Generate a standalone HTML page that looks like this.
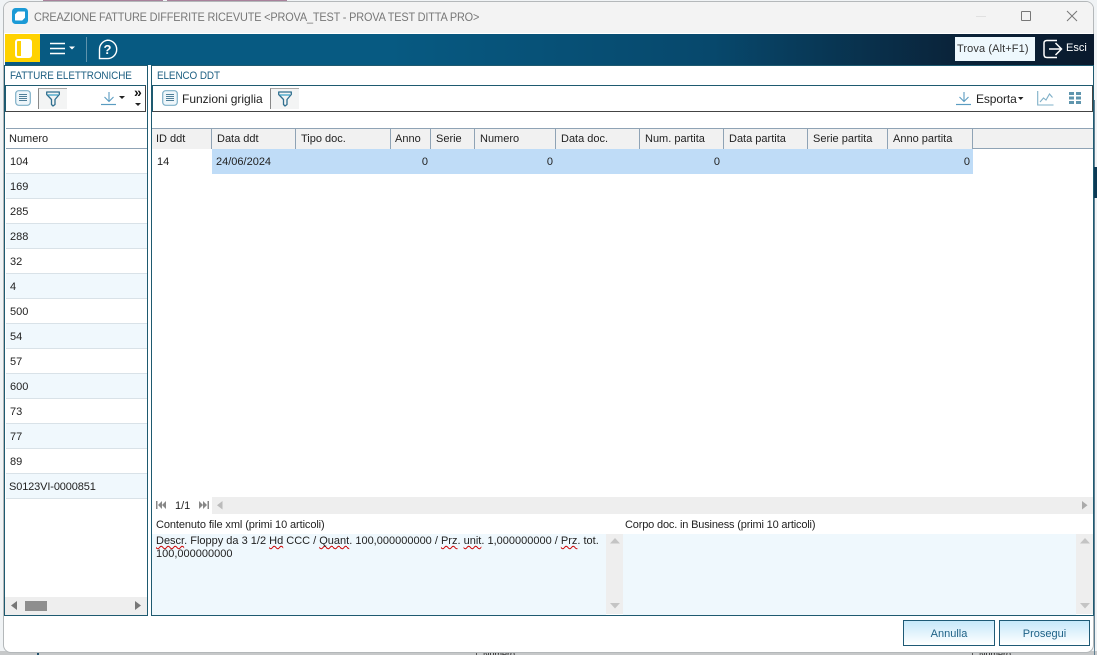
<!DOCTYPE html>
<html><head><meta charset="utf-8">
<style>
html,body{margin:0;padding:0}
body{width:1097px;height:655px;overflow:hidden;position:relative;background:#fff;font-family:"Liberation Sans",sans-serif;font-size:11px;color:#222}
div,span,svg{position:absolute;box-sizing:border-box}
.t{white-space:nowrap;line-height:14px}
.h{top:129px;height:20px;border-right:1px solid #8fa3b5;line-height:20px;padding-left:5px;white-space:nowrap;background:#f1f1f1;font-size:11px;color:#222}
.r{left:6px;width:141px;height:25px;border-bottom:1px solid #d9e2e8;line-height:26px;padding-left:4px;font-size:11px;color:#222}
.b{background:#f0f8fd}
.n{top:149px;height:25px;line-height:26px;text-align:right;padding-right:3px;color:#222}
.sq{position:static;text-decoration:underline wavy #c00;text-decoration-thickness:1px;text-underline-offset:1px;text-decoration-skip-ink:none}
.btn{top:620px;height:26px;border:1px solid #1e5a76;background:linear-gradient(#c6e8fa,#fff);color:#1e6287;text-align:center;line-height:26px;font-size:11px}
</style></head><body>
<div style="left:0;top:0;width:1097px;height:655px;background:#f0f3f5"></div>
<div style="left:0;top:651px;width:1097px;height:4px;background:#c6c8c9"></div>
<div style="left:43px;top:0;width:120px;height:2px;background:#a8819b"></div>
<div style="left:167px;top:0;width:120px;height:2px;background:#a8819b"></div>
<div style="left:37px;top:648px;width:2px;height:7px;background:#1e4f6a"></div>
<div style="left:1094px;top:100px;width:1px;height:555px;background:#5f7f92"></div>
<div style="left:1094px;top:167px;width:3px;height:31px;background:#0c3a55"></div>
<div style="left:476px;top:650px;width:100px;height:5px;font-size:9px;line-height:9px;overflow:hidden;padding-left:6px;border-left:1px solid #555">Numero</div>
<div style="left:972px;top:650px;width:100px;height:5px;font-size:9px;line-height:9px;overflow:hidden;padding-left:6px;border-left:1px solid #555">Numero</div>

<!-- window -->
<div style="left:3px;top:1px;width:1091px;height:652px;background:#fff;border:1px solid #b4b8ba;border-radius:8px;overflow:hidden">
<div style="left:0;top:0;width:1091px;height:31px;background:#f3f3f3"></div>
</div>
<svg style="left:12px;top:8px" width="16" height="16" viewBox="0 0 16 16"><rect width="16" height="16" rx="3.5" fill="#1b9ad6"/><path d="M6 4H12.5V9.5L10 12H3.5V6.5Z" fill="#fff" stroke="#fff" stroke-linejoin="round"/></svg>
<div class="t" style="left:34px;top:10px;color:#777;font-size:12px;transform-origin:0 50%;transform:scaleX(.908);letter-spacing:-.17px">CREAZIONE FATTURE DIFFERITE RICEVUTE &lt;PROVA_TEST - PROVA TEST DITTA PRO&gt;</div>
<div style="left:976px;top:16px;width:10px;height:1px;background:#e0e0e0"></div>
<div style="left:1021px;top:11px;width:10px;height:10px;border:1px solid #777;border-radius:1px"></div>
<svg style="left:1066px;top:10px" width="12" height="12" viewBox="0 0 12 12"><path d="M1 1L11 11M11 1L1 11" stroke="#777" stroke-width="1" fill="none"/></svg>

<!-- toolbar -->
<div style="left:5px;top:34px;width:1089px;height:31px;background:linear-gradient(90deg,#075a82 0%,#075a82 35%,#07486c 65%,#0a2238 88%,#0a1a2d 100%)"></div>
<div style="left:5px;top:34px;width:35px;height:28px;background:#ffd200"></div>
<div style="left:15px;top:39px;width:17px;height:19px;border-radius:3px;border:2px solid #fff;background:linear-gradient(90deg,#ffd200 30%,#fff 30%)"></div>
<svg style="left:49px;top:42px" width="28" height="14" viewBox="0 0 28 14"><path d="M1 1.5H16M1 6.5H16M1 11.5H16" stroke="#fff" stroke-width="1.6"/><path d="M20 4.5H26L23 7.5Z" fill="#fff"/></svg>
<div style="left:86px;top:37px;width:1px;height:25px;background:#5f93ac"></div>
<svg style="left:97px;top:39px" width="21" height="21" viewBox="0 0 21 21"><path d="M10.5 1.2A9.2 9.2 0 1 1 10.5 19.6H2.5V10.5A9.2 9.2 0 0 1 10.5 1.2Z" fill="none" stroke="#fff" stroke-width="1.4"/><text x="10.5" y="15" font-size="13" font-weight="bold" fill="#fff" text-anchor="middle" font-family="Liberation Sans">?</text></svg>
<div style="left:955px;top:37px;width:80px;height:24px;background:#eef8fd;color:#333;line-height:24px;padding-left:2px;font-size:11px;letter-spacing:.1px;white-space:nowrap">Trova (Alt+F1)</div>
<svg style="left:1043px;top:39px" width="20" height="20" viewBox="0 0 20 20"><path d="M14 1.5H4Q1 1.5 1 4V15.5Q1 18.5 4 18.5H14" fill="none" stroke="#fff" stroke-width="1.5"/><path d="M6 10H18M12.5 4L18.5 10L12.5 16" fill="none" stroke="#fff" stroke-width="1.5"/></svg>
<div class="t" style="left:1066px;top:41px;color:#fff;font-size:11px">Esci</div>

<!-- left panel -->
<div style="left:4px;top:65px;width:144px;height:551px;border:1px solid #1e5a70;background:#fff"></div>
<div class="t" style="left:10px;top:69px;color:#1d5f82;font-size:11px;letter-spacing:-.1px;transform-origin:0 50%;transform:scaleX(.9)">FATTURE ELETTRONICHE</div>
<div style="left:5px;top:85px;width:141px;height:27px;border:1px solid #444;border-top-color:#1e5a70;border-left-color:#1e5a70;background:#fff"></div>
<svg style="left:15px;top:90px" width="16" height="16" viewBox="0 0 16 16"><rect x=".7" y=".7" width="14.6" height="14.6" rx="3" fill="#eef6fa" stroke="#7fb0c8" stroke-width="1.2"/><path d="M4 4.5H12M4 6.5H12M4 8.5H12M4 10.5H12" stroke="#4f7f99"/></svg>
<div style="left:38px;top:88px;width:29px;height:21px;background:#f3f4f4;border-left:1px solid #888;border-top:1px solid #aaa"></div>
<svg style="left:46px;top:91px" width="14" height="16" viewBox="0 0 14 16"><path d="M.7 1H13.3V3.5L9 8.5V13.5L7 15L5.5 13.5V8.5L.7 3.5Z" fill="none" stroke="#2f6f8f" stroke-width="1.3" stroke-linejoin="round"/><path d="M2 4H12" stroke="#3fa5c8" stroke-width="1.3"/></svg>
<svg style="left:101px;top:91px" width="16" height="15" viewBox="0 0 16 15"><path d="M8 1V10M3.5 6L8 10.5L12.5 6" fill="none" stroke="#5b9cc1" stroke-width="1.1"/><path d="M0 13.5H15" stroke="#5b9cc1" stroke-width="1.2"/></svg>
<svg style="left:119px;top:96px" width="7" height="4"><path d="M0 0H6L3 3Z" fill="#222"/></svg>
<div style="left:134px;top:86px;font-size:14px;line-height:12px;font-weight:bold;color:#111">»</div>
<svg style="left:135px;top:103px" width="7" height="4"><path d="M0 0H6L3 3Z" fill="#222"/></svg>
<div style="left:6px;top:128px;width:141px;height:21px;border-top:1px solid #8fa3b5;border-bottom:1px solid #8fa3b5;background:#fff;line-height:20px;padding-left:3px">Numero</div>
<div class="r" style="top:149px">104</div>
<div class="r b" style="top:174px">169</div>
<div class="r" style="top:199px">285</div>
<div class="r b" style="top:224px">288</div>
<div class="r" style="top:249px">32</div>
<div class="r b" style="top:274px">4</div>
<div class="r" style="top:299px">500</div>
<div class="r b" style="top:324px">54</div>
<div class="r" style="top:349px">57</div>
<div class="r b" style="top:374px">600</div>
<div class="r" style="top:399px">73</div>
<div class="r b" style="top:424px">77</div>
<div class="r" style="top:449px">89</div>
<div class="r b" style="top:474px;padding-left:3px;letter-spacing:-.13px">S0123VI-0000851</div>
<div style="left:5px;top:597px;width:142px;height:18px;background:#eee"></div>
<svg style="left:11px;top:601px" width="7" height="10"><path d="M6 0V9L0 4.5Z" fill="#777"/></svg>
<div style="left:25px;top:601px;width:22px;height:10px;background:#8e8e8e"></div>
<svg style="left:135px;top:601px" width="7" height="10"><path d="M0 0V9L6 4.5Z" fill="#777"/></svg>

<!-- right panel -->
<div style="left:151px;top:65px;width:943px;height:551px;border:1px solid #1e5a70;background:#fff"></div>
<div class="t" style="left:157px;top:69px;color:#1d5f82;font-size:11px;letter-spacing:-.1px;transform-origin:0 50%;transform:scaleX(.9)">ELENCO DDT</div>
<div style="left:152px;top:85px;width:941px;height:27px;border:1px solid #444;border-top-color:#1e5a70;border-left-color:#1e5a70;background:#fff"></div>
<svg style="left:162px;top:90px" width="16" height="16" viewBox="0 0 16 16"><rect x=".7" y=".7" width="14.6" height="14.6" rx="3" fill="#eef6fa" stroke="#7fb0c8" stroke-width="1.2"/><path d="M4 4.5H12M4 6.5H12M4 8.5H12M4 10.5H12" stroke="#4f7f99"/></svg>
<div class="t" style="left:182px;top:92px;font-size:12px;color:#222">Funzioni griglia</div>
<div style="left:270px;top:88px;width:29px;height:21px;background:#f3f4f4;border-left:1px solid #888;border-top:1px solid #aaa"></div>
<svg style="left:278px;top:91px" width="14" height="16" viewBox="0 0 14 16"><path d="M.7 1H13.3V3.5L9 8.5V13.5L7 15L5.5 13.5V8.5L.7 3.5Z" fill="none" stroke="#2f6f8f" stroke-width="1.3" stroke-linejoin="round"/><path d="M2 4H12" stroke="#3fa5c8" stroke-width="1.3"/></svg>
<svg style="left:956px;top:91px" width="16" height="15" viewBox="0 0 16 15"><path d="M8 1V10M3.5 6L8 10.5L12.5 6" fill="none" stroke="#5b9cc1" stroke-width="1.1"/><path d="M0 13.5H15" stroke="#5b9cc1" stroke-width="1.2"/></svg>
<div class="t" style="left:976px;top:92px;font-size:12px;color:#222;letter-spacing:-.1px">Esporta</div>
<svg style="left:1018px;top:97px" width="6" height="4"><path d="M0 0H5.5L2.7 3Z" fill="#222"/></svg>
<svg style="left:1037px;top:91px" width="17" height="15" viewBox="0 0 17 15"><path d="M.7 0V14H16.5" fill="none" stroke="#7fb0c8" stroke-width="1.1"/><path d="M3 11L6.5 7L9 9L12.5 3L15.5 6.5" fill="none" stroke="#7fb0c8" stroke-width="1.1"/></svg>
<svg style="left:1069px;top:92px" width="12" height="12"><path d="M0 0H5V3H0ZM7 0H12V3H7ZM0 4.5H5V7.5H0ZM7 4.5H12V7.5H7ZM0 9H5V12H0ZM7 9H12V12H7Z" fill="#5f95ad"/></svg>

<div style="left:152px;top:128px;width:941px;height:21px;border-top:1px solid #8fa3b5;border-bottom:1px solid #8fa3b5;background:#f1f1f1"></div>
<div class="h" style="left:152px;width:60px;padding-left:4px">ID ddt</div>
<div class="h" style="left:212px;width:84px">Data ddt</div>
<div class="h" style="left:296px;width:95px">Tipo doc.</div>
<div class="h" style="left:391px;width:40px;padding-left:4px">Anno</div>
<div class="h" style="left:431px;width:44px">Serie</div>
<div class="h" style="left:475px;width:81px">Numero</div>
<div class="h" style="left:556px;width:84px">Data doc.</div>
<div class="h" style="left:640px;width:84px">Num. partita</div>
<div class="h" style="left:724px;width:84px">Data partita</div>
<div class="h" style="left:808px;width:80px">Serie partita</div>
<div class="h" style="left:888px;width:85px">Anno partita</div>

<div style="left:212px;top:149px;width:761px;height:25px;background:#bfdcf7"></div>
<div class="t" style="left:157px;top:155px">14</div>
<div class="t" style="left:216px;top:155px">24/06/2024</div>
<div class="n" style="left:391px;width:40px">0</div>
<div class="n" style="left:475px;width:81px">0</div>
<div class="n" style="left:640px;width:84px;padding-right:4px">0</div>
<div class="n" style="left:888px;width:85px">0</div>

<!-- pager -->
<div style="left:212px;top:497px;width:881px;height:17px;background:#eee"></div>
<svg style="left:156px;top:501px" width="10" height="9"><path d="M0 0H1.5V8H0ZM6 0V8L2 4ZM10 0V8L6 4Z" fill="#888"/></svg>
<div class="t" style="left:175px;top:499px">1/1</div>
<svg style="left:199px;top:501px" width="10" height="9"><path d="M0 0V8L4 4ZM4 0V8L8 4ZM8.5 0H10V8H8.5Z" fill="#888"/></svg>
<svg style="left:217px;top:501px" width="6" height="9"><path d="M5.5 0V8.5L0 4.2Z" fill="#bbb"/></svg>
<svg style="left:1082px;top:501px" width="6" height="9"><path d="M0 0V8.5L5.5 4.2Z" fill="#aaa"/></svg>

<!-- memo -->
<div class="t" style="left:156px;top:518px;font-size:11px;letter-spacing:-.1px">Contenuto file xml (primi 10 articoli)</div>
<div class="t" style="left:625px;top:518px;font-size:11px;letter-spacing:-.17px">Corpo doc. in Business (primi 10 articoli)</div>
<div style="left:152px;top:534px;width:454px;height:81px;background:#eff8fd"></div>
<div style="left:606px;top:534px;width:17px;height:80px;background:#eee"></div>
<div style="left:623px;top:534px;width:453px;height:81px;background:#eff8fd"></div>
<div style="left:1076px;top:534px;width:17px;height:80px;background:#eee"></div>
<div style="left:156px;top:534px;width:449px;line-height:13px;font-size:11px;padding-top:1px;color:#222;white-space:nowrap"><span class="sq">Descr</span>. Floppy da 3 1/2 <span class="sq">Hd</span> CCC / <span class="sq">Quant</span>. 100,000000000 / <span class="sq">Prz</span>. <span class="sq">unit</span>. 1,000000000 / <span class="sq">Prz</span>. tot.<br>100,000000000</div>
<svg style="left:610px;top:538px" width="10" height="6"><path d="M0 5.5H10L5 0Z" fill="#c4c4c4"/></svg>
<svg style="left:610px;top:603px" width="10" height="6"><path d="M0 0H10L5 5.5Z" fill="#c4c4c4"/></svg>
<svg style="left:1080px;top:538px" width="10" height="6"><path d="M0 5.5H10L5 0Z" fill="#c4c4c4"/></svg>
<svg style="left:1080px;top:603px" width="10" height="6"><path d="M0 0H10L5 5.5Z" fill="#c4c4c4"/></svg>

<!-- buttons -->
<div class="btn" style="left:903px;width:92px">Annulla</div>
<div class="btn" style="left:999px;width:91px">Prosegui</div>
</body></html>
